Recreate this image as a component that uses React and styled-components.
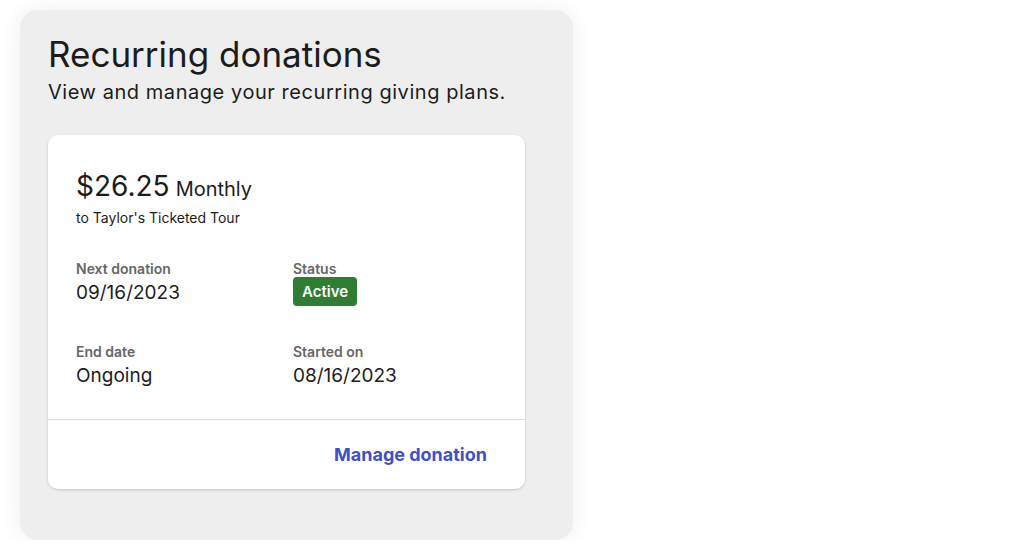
import React from "react";
import styled, { createGlobalStyle } from "styled-components";

const Global = createGlobalStyle`
  html, body { margin: 0; padding: 0; background: #ffffff; }
  body { font-family: "Inter", "Lato", "Noto Sans", sans-serif; color: #1c1c1c; }
  * { box-sizing: border-box; }
`;

const Page = styled.div`
  padding: 10px 0 0 20px;
`;

const Panel = styled.section`
  width: 553px;
  height: 530px;
  background: #eeeeee;
  border-radius: 18px;
  box-shadow: 0 0 22px rgba(0, 0, 0, 0.07);
  padding: 23px 48px 0 28px;
`;

const Title = styled.h1`
  margin: 0;
  font-size: 35px;
  font-weight: 400;
  line-height: 42px;
  color: #1c1c1c;
  letter-spacing: 0;
`;

const Subtitle = styled.p`
  margin: 4px 0 0;
  font-size: 20px;
  line-height: 26px;
  letter-spacing: 0.55px;
  color: #1c1c1c;
`;

const Card = styled.article`
  margin-top: 30px;
  background: #ffffff;
  border-radius: 10px;
  box-shadow: 0 1px 3px rgba(0, 0, 0, 0.16);
  overflow: hidden;
`;

const Body = styled.div`
  padding: 34px 28px 30px;
`;

const AmountRow = styled.div`
  display: flex;
  align-items: baseline;
  gap: 6px;
`;

const Amount = styled.span`
  font-size: 28px;
  line-height: 34px;
`;

const Frequency = styled.span`
  font-size: 20px;
`;

const Recipient = styled.div`
  margin-top: 5px;
  font-size: 14px;
  line-height: 20px;
`;

const Details = styled.dl`
  margin: 32px 0 0;
  display: grid;
  grid-template-columns: 217px 1fr;
  row-gap: 37px;
`;

const Field = styled.div`
  display: flex;
  flex-direction: column;
  align-items: flex-start;
`;

const Label = styled.dt`
  font-size: 14px;
  font-weight: 600;
  line-height: 18px;
  color: #666666;
`;

const Value = styled.dd`
  margin: 2px 0 0;
  font-size: 19px;
  line-height: 26px;
`;

const Badge = styled.dd`
  margin: -1px 0 0;
  background: #2e7d32;
  color: #ffffff;
  font-size: 15px;
  font-weight: 600;
  line-height: 29px;
  height: 29px;
  padding: 0 9px;
  border-radius: 4px;
`;

const Footer = styled.div`
  border-top: 1px solid #e0e0e0;
  height: 70px;
  display: flex;
  align-items: center;
  justify-content: flex-end;
  padding-right: 38px;
`;

const LinkButton = styled.a`
  font-size: 18px;
  font-weight: 700;
  color: #3f51c5;
  text-decoration: none;
  cursor: pointer;
`;

export default function App() {
  return (
    <>
      <Global />
      <Page>
        <Panel>
          <Title>Recurring donations</Title>
          <Subtitle>View and manage your recurring giving plans.</Subtitle>
          <Card>
            <Body>
              <AmountRow>
                <Amount>$26.25</Amount>
                <Frequency>Monthly</Frequency>
              </AmountRow>
              <Recipient>to Taylor's Ticketed Tour</Recipient>
              <Details>
                <Field>
                  <Label>Next donation</Label>
                  <Value>09/16/2023</Value>
                </Field>
                <Field>
                  <Label>Status</Label>
                  <Badge>Active</Badge>
                </Field>
                <Field>
                  <Label>End date</Label>
                  <Value>Ongoing</Value>
                </Field>
                <Field>
                  <Label>Started on</Label>
                  <Value>08/16/2023</Value>
                </Field>
              </Details>
            </Body>
            <Footer>
              <LinkButton>Manage donation</LinkButton>
            </Footer>
          </Card>
        </Panel>
      </Page>
    </>
  );
}
